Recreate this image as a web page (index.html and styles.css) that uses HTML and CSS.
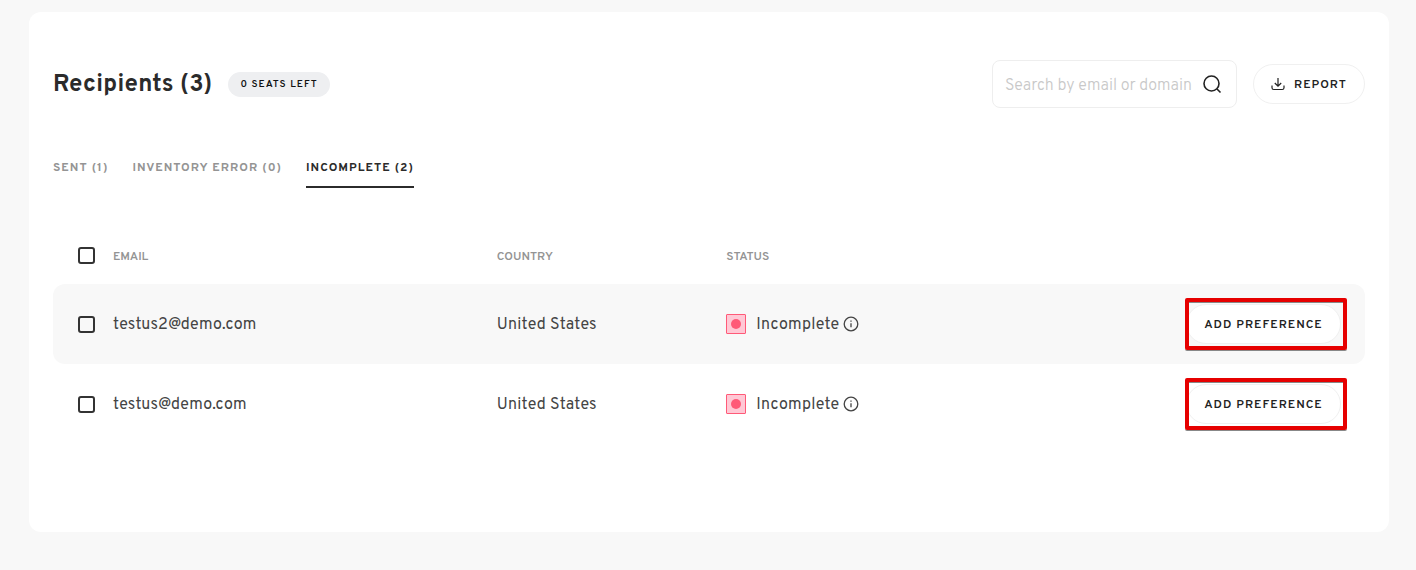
FILE: index.html
```html
<!DOCTYPE html>
<html lang="en">
<head>
    <meta charset="utf-8">
    <title>Recipients</title>
    <link rel="stylesheet" href="styles.css">
</head>
<body>
    <main class="card">
        <header class="card-header">
            <h1>Recipients (3)</h1>
            <span class="seats">0 SEATS LEFT</span>
            <form class="search">
                <input type="text" placeholder="Search by email or domain" aria-label="Search by email or domain">
                <button type="submit" class="search-button" aria-label="Search">
                    <svg width="20" height="20" viewBox="0 0 20 20" fill="none" stroke="#222" stroke-width="1.6">
                        <circle cx="9.5" cy="9.5" r="7.5"/>
                        <path d="M15 15l3.5 3.5"/>
                    </svg>
                </button>
            </form>
            <button type="button" class="pill report">
                <svg width="14" height="14" viewBox="0 0 14 14" fill="none" stroke="#222" stroke-width="1.2">
                    <path d="M7 1v8M3.8 6L7 9.2 10.2 6M1 8.5v2.2a1.8 1.8 0 0 0 1.8 1.8h8.4a1.8 1.8 0 0 0 1.8-1.8V8.5"/>
                </svg>
                <span>REPORT</span>
            </button>
        </header>

        <nav class="tabs">
            <a href="#sent">SENT (1)</a>
            <a href="#inventory-error">INVENTORY ERROR (0)</a>
            <a href="#incomplete" class="active">INCOMPLETE (2)</a>
        </nav>

        <table class="recipients">
            <colgroup>
                <col class="col-check">
                <col class="col-email">
                <col class="col-country">
                <col class="col-status">
                <col>
            </colgroup>
            <thead>
                <tr>
                    <th><input type="checkbox" aria-label="Select all"></th>
                    <th>EMAIL</th>
                    <th>COUNTRY</th>
                    <th>STATUS</th>
                    <th></th>
                </tr>
            </thead>
            <tbody>
                <tr class="shaded">
                    <td><input type="checkbox" id="r1"></td>
                    <td class="text"><label for="r1">testus2@demo.com</label></td>
                    <td class="text">United States</td>
                    <td>
                        <div class="status">
                            <span class="dot"></span>
                            <span class="status-name">Incomplete</span>
                            <svg width="16" height="16" viewBox="0 0 16 16" fill="none" stroke="#444" stroke-width="1.3">
                                <circle cx="8" cy="8" r="6.8"/>
                                <path d="M8 7.2v4M8 4.6v1.2"/>
                            </svg>
                        </div>
                    </td>
                    <td class="action">
                        <div class="marked">
                            <button type="button" class="pill">ADD PREFERENCE</button>
                            <span class="frame"></span>
                        </div>
                    </td>
                </tr>
                <tr>
                    <td><input type="checkbox" id="r2"></td>
                    <td class="text"><label for="r2">testus@demo.com</label></td>
                    <td class="text">United States</td>
                    <td>
                        <div class="status">
                            <span class="dot"></span>
                            <span class="status-name">Incomplete</span>
                            <svg width="16" height="16" viewBox="0 0 16 16" fill="none" stroke="#444" stroke-width="1.3">
                                <circle cx="8" cy="8" r="6.8"/>
                                <path d="M8 7.2v4M8 4.6v1.2"/>
                            </svg>
                        </div>
                    </td>
                    <td class="action">
                        <div class="marked">
                            <button type="button" class="pill">ADD PREFERENCE</button>
                            <span class="frame"></span>
                        </div>
                    </td>
                </tr>
            </tbody>
        </table>
    </main>
</body>
</html>
```

FILE: styles.css
```css
* {
    box-sizing: border-box;
}
body {
    margin: 0;
    padding: 12px 27px 38px 29px;
    background-color: #f8f8f8;
    color: #444;
    font-family: Overpass, Roboto, sans-serif;
    font-size: 16px;
}
.card {
    padding: 48px 24px 88px;
    background-color: #fff;
    border-radius: 12px;
}
.card-header {
    display: flex;
    align-items: center;
}
h1 {
    margin: 0 16px 0 0;
    padding-top: 2px;
    color: #2b2b2b;
    font-size: 24px;
    line-height: 32px;
    letter-spacing: 0.01em;
}
.seats {
    padding: 1px 12px 0;
    border-radius: 13px;
    background-color: #eeeff1;
    color: #111;
    font-size: 10px;
    font-weight: 600;
    line-height: 24px;
    letter-spacing: 1px;
}
.search {
    display: flex;
    align-items: center;
    width: 245px;
    height: 48px;
    margin: 0 16px 0 auto;
    padding: 0 14px 0 12px;
    border: 1px solid #eee;
    border-radius: 8px;
}
.search input {
    flex: 1;
    min-width: 0;
    padding: 3px 0 0;
    border: 0;
    outline: 0;
    font-family: inherit;
    font-size: 16px;
    font-weight: 300;
}
.search input::placeholder {
    color: #c8c8c8;
}
.search-button {
    display: flex;
    padding: 0;
    border: 0;
    background: none;
}
.pill {
    height: 40px;
    padding: 2px 16px 0;
    border: 1px solid #f0f0f0;
    border-radius: 20px;
    background-color: #fff;
    color: #222;
    font-family: inherit;
    font-size: 12px;
    font-weight: 600;
    letter-spacing: 1px;
    white-space: nowrap;
}
.report {
    display: flex;
    align-items: center;
    justify-content: center;
    gap: 9px;
    min-width: 112px;
    padding-top: 0;
}
.report span {
    padding-top: 2px;
}
.tabs {
    display: flex;
    gap: 24px;
    margin-top: 48px;
}
.tabs a {
    padding-bottom: 6px;
    border-bottom: 2px solid transparent;
    color: #949494;
    font-size: 12px;
    font-weight: 700;
    line-height: 24px;
    letter-spacing: 1px;
    text-decoration: none;
}
.tabs .active {
    border-color: #2b2b2b;
    color: #2b2b2b;
}
.recipients {
    width: 100%;
    margin-top: 40px;
    border-spacing: 0;
    table-layout: fixed;
}
.col-check {
    width: 60px;
}
.col-email {
    width: 29.25%;
}
.col-country {
    width: 17.5%;
}
.col-status {
    width: 30%;
}
.recipients th {
    height: 56px;
    padding: 2px 0 0;
    color: #949494;
    font-size: 12px;
    font-weight: 600;
    text-align: left;
}
.recipients td {
    height: 80px;
    padding: 0;
    letter-spacing: 0.015em;
}
.recipients .text {
    padding-top: 2px;
}
.recipients th:first-child,
.recipients td:first-child {
    padding: 0 0 0 25px;
}
.recipients th:first-child {
    padding-bottom: 2px;
}
.recipients input {
    display: block;
    appearance: none;
    width: 17px;
    height: 17px;
    margin: 0;
    border: 2px solid #333;
    border-radius: 3px;
    background-color: #fff;
}
.shaded td {
    background-color: #f8f8f8;
}
.shaded td:first-child {
    border-radius: 12px 0 0 12px;
}
.shaded td:last-child {
    border-radius: 0 12px 12px 0;
}
.shaded input {
    background-color: #f8f8f8;
}
.status {
    display: flex;
    align-items: center;
}
.status-name {
    padding-top: 2px;
}
.dot {
    display: flex;
    align-items: center;
    justify-content: center;
    width: 20px;
    height: 20px;
    margin-right: 10px;
    border: 1px solid #ff5a78;
    border-radius: 1px;
    background-color: #ffc8d5;
}
.dot::before {
    content: "";
    width: 10px;
    height: 10px;
    border-radius: 50%;
    background-color: #ff5a78;
}
.status svg {
    margin-left: 4px;
}
.recipients .action {
    padding-right: 24px;
    text-align: right;
}
.marked {
    display: inline-block;
    position: relative;
}
.marked .pill {
    display: block;
    min-width: 155px;
}
/* red highlight drawn over the button */
.frame {
    position: absolute;
    inset: -6px -6px -6px -1px;
    border: 4px solid #e60000;
    border-radius: 2px;
    box-shadow: 0 1px 0 #888, inset 0 1px 0 #888;
    pointer-events: none;
}
```
